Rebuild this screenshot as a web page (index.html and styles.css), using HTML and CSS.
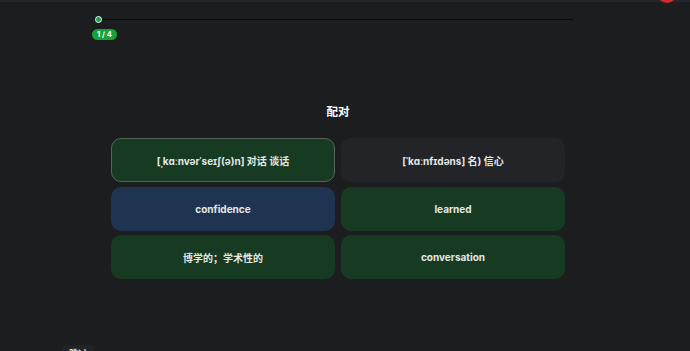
FILE: index.html
```html
<!doctype html>
<html>
<head>
    <meta charset="UTF-8">
    <title>配对</title>
    <link rel="stylesheet" href="styles.css">
</head>
<body>
    <div class="page">
        <div class="topbar"></div>
        <div class="close-dot"></div>

        <div class="progress">
            <div class="progress-track">
                <span class="progress-dot"></span>
                <span class="progress-line"></span>
            </div>
            <span class="progress-badge">1 / 4</span>
        </div>

        <div class="board">
            <h2 class="title">配对</h2>

            <div class="match-grid">
                <div class="card card-selected">[ˌkɑːnvərˈseɪʃ(ə)n] 对话 谈话</div>
                <div class="card card-plain">[ˈkɑːnfɪdəns] 名) 信心</div>
                <div class="card card-blue">confidence</div>
                <div class="card card-green">learned</div>
                <div class="card card-green">博学的；学术性的</div>
                <div class="card card-green">conversation</div>
            </div>
        </div>

        <div class="footer">
            <span class="skip">跳过</span>
        </div>
    </div>
</body>
</html>
```

FILE: styles.css
```css
body {
    margin: 0;
    background-color: #1c1d1f;
    font-family: "Inter", "Noto Sans CJK SC", sans-serif;
    color: #e4e8e5;
}
.page {
    position: relative;
    width: 690px;
    height: 351px;
    overflow: hidden;
}
.topbar {
    height: 2px;
    background-color: #26272c;
}

/* 右上角露出一半的红色按钮 */
.close-dot {
    position: absolute;
    top: -17px;
    left: 657px;
    width: 20px;
    height: 20px;
    border-radius: 50%;
    background-color: #d42a2a;
}

.progress {
    display: flex;
    flex-direction: column;
    align-items: flex-start;
    padding: 13px 0 0 95px;
    width: 478px;
}
.progress-track {
    display: flex;
    align-items: center;
    width: 100%;
    height: 9px;
}
.progress-dot {
    width: 5px;
    height: 5px;
    border: 1.5px solid #f4f4f4;
    border-radius: 50%;
    background-color: #16a34a;
    flex-shrink: 0;
}
.progress-line {
    flex: 1;
    height: 1px;
    background-color: #0a0a0b;
}
.progress-badge {
    margin: 5px 0 0 -3px;
    padding: 0 5px;
    height: 11px;
    line-height: 11px;
    border-radius: 6px;
    background-color: #17a33a;
    color: #ffffff;
    font-size: 7.5px;
    font-weight: 700;
}

/* 标题和卡片网格同宽，这样标题按网格居中 */
.board {
    width: 454px;
    margin: 64px 0 0 111px;
}
.title {
    margin: 0;
    text-align: center;
    font-size: 11.5px;
    font-weight: 700;
    color: #ffffff;
    line-height: 16px;
}

.match-grid {
    display: grid;
    grid-template-columns: 1fr 1fr;
    grid-auto-rows: 44px;
    column-gap: 6px;
    row-gap: 4.5px;
    margin-top: 18px;
}
.card {
    display: flex;
    align-items: center;
    justify-content: center;
    border-radius: 10px;
    font-size: 10px;
    font-weight: 700;
    box-sizing: border-box;
}
.card-selected {
    background-color: #173a22;
    border: 1px solid #55655a;
}
.card-plain {
    background-color: #232428;
}
.card-blue {
    background-color: #1f3450;
}
.card-green {
    background-color: #173a22;
}

.footer {
    margin: 62px 0 0 62px;
}
.skip {
    display: inline-block;
    padding: 2px 7px 0;
    background-color: #222326;
    border-radius: 4px 4px 0 0;
    font-size: 9px;
    font-weight: 600;
    color: #dfe5e2;
}
```
